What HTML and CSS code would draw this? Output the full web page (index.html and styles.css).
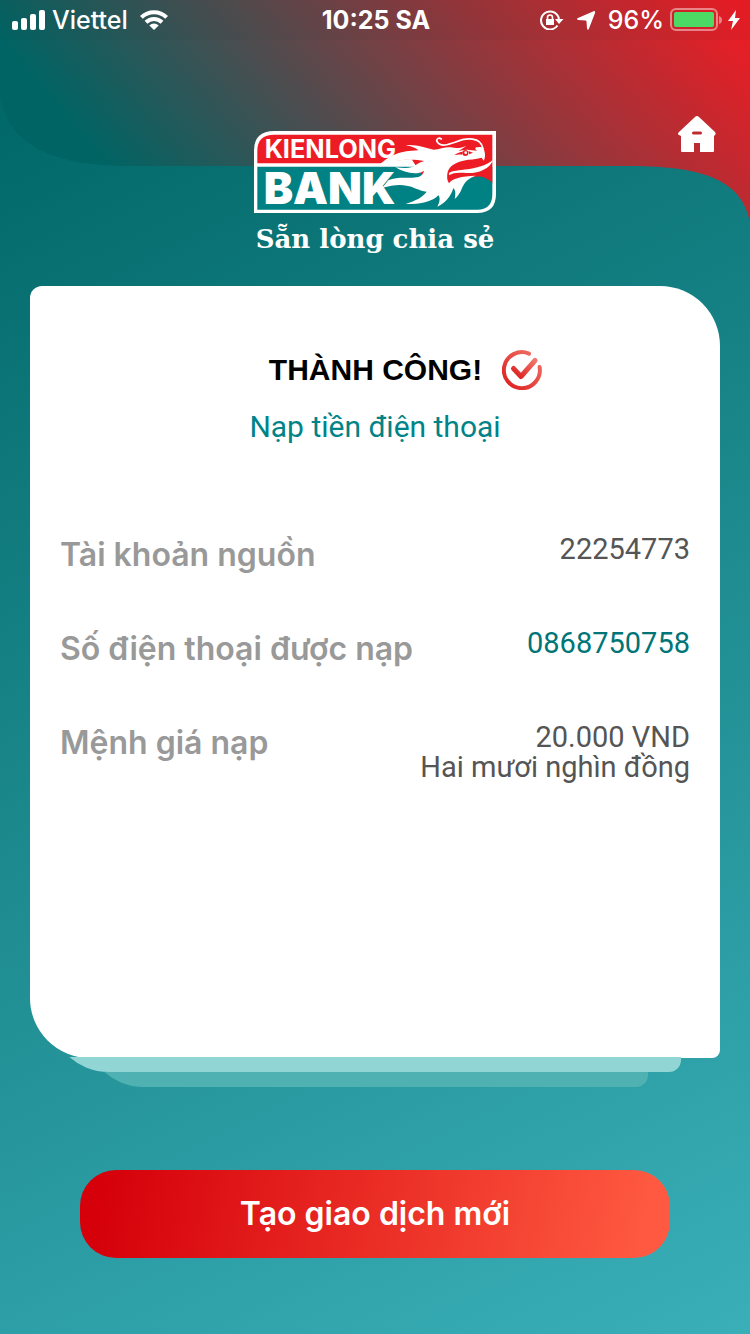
FILE: index.html
```html
<!DOCTYPE html>
<html lang="vi">
<head>
<meta charset="utf-8">
<meta name="viewport" content="width=device-width, initial-scale=1">
<title>Kienlong Bank</title>
<link rel="stylesheet" href="styles.css">
</head>
<body>
<div class="screen">
  <svg class="backdrop" viewBox="0 0 750 222" preserveAspectRatio="none" aria-hidden="true">
    <defs>
      <linearGradient id="sky" gradientUnits="userSpaceOnUse" x1="0" y1="42" x2="445" y2="-336">
        <stop offset="0" stop-color="#006464"/>
        <stop offset="1" stop-color="#ed1c24"/>
      </linearGradient>
    </defs>
    <path fill="url(#sky)" d="M0 0H750V222C742 181 705 166 630 166H120C60 165 8 148 0 96Z"/>
  </svg>

  <div class="status">
    <div class="status-side">
      <svg width="34" height="20" viewBox="0 0 34 20" fill="#fff" aria-hidden="true">
        <rect x="0" y="11" width="6" height="9" rx="2"/><rect x="9" y="8" width="6" height="12" rx="2"/>
        <rect x="18" y="4" width="6" height="16" rx="2"/><rect x="27" y="0" width="6" height="20" rx="2"/>
      </svg>
      <span>Viettel</span>
      <svg class="wifi" width="28" height="20" viewBox="0 0 28 20" aria-hidden="true">
        <g fill="none" stroke="#fff" stroke-width="4"><path d="M1.400 7.400A18 18 0 0 1 26.600 7.400"/><path d="M6 12.200A11.500 11.500 0 0 1 22 12.200"/></g>
        <path fill="#fff" d="M9.300 15.400A7 7 0 0 1 18.700 15.400L14 20Z"/>
      </svg>
    </div>
    <time class="clock">10:25 SA</time>
    <div class="status-side status-end">
      <svg width="24" height="20" viewBox="0 0 24 20" aria-hidden="true">
        <path fill="none" stroke="#fff" stroke-width="2" d="M17.500 15.500A9 9 0 1 1 19 9.500"/>
        <path fill="#fff" d="M15 9H23.500L19 14ZM6 9H14V15H6Z"/>
        <path fill="none" stroke="#fff" stroke-width="1.600" d="M7.500 9V7.500A2.500 2.500 0 0 1 12.500 7.500V9"/>
      </svg>
      <svg class="arrow" width="20" height="20" viewBox="0 0 20 20" aria-hidden="true"><path fill="#fff" d="M17 1.400Q19.500 0 19 3L13 18.500Q12 21 11 18.500L10.500 11.500Q10.500 10.500 9.500 10.500L2 10Q0 9 2 8Z"/></svg>
      <span>96%</span>
      <svg class="battery" width="52" height="24" viewBox="0 0 52 24" aria-hidden="true">
        <rect x="1" y="1" width="46" height="21" rx="5" fill="none" stroke="#fff" stroke-opacity=".45" stroke-width="2"/>
        <rect x="4" y="4" width="40" height="15" rx="2" fill="#4cd964"/>
        <path fill="#fff" fill-opacity=".45" d="M49 8Q52 9 52 12T49 16Z"/>
      </svg>
      <svg width="12" height="20" viewBox="0 0 12 20" fill="#fff" aria-hidden="true"><path d="M8 0L0 11H5L3 20L12 8H7Z"/></svg>
    </div>
  </div>

  <header class="top">
    <div class="brand">
      <svg class="logo" viewBox="27 33 726 246" role="img" aria-label="Kienlong Bank">
        <path fill="#fff" d="M88 33H753V222Q753 279 696 279H27V92Q27 33 88 33Z"/>
        <path fill="#008285" d="M37 140H742V222Q742 269 696 269H37Z"/>
        <path fill="#ed1c24" d="M37 130V92Q37 44 88 44H742V190C722 164 680 162 650 190L560 210L500 118C460 120 430 124 410 130Z"/>
        <text class="logo-small" x="59" y="114">KIENLONG</text>
        <text class="logo-big" x="56" y="253">BANK</text>
        <path fill="#fff" d="M405 132C428 112 456 94 500 92L520 91C512 84 500 78 482 76C512 72 540 84 566 89C586 88 600 80 618 82C634 86 650 84 664 78L640 94C650 92 658 88 672 90L696 92C688 86 690 80 700 82C708 78 716 84 718 92C722 104 720 114 716 122L710 113C690 119 675 117 655 122C630 127 612 140 608 156C605 170 606 182 612 190C620 176 650 168 692 167C672 174 660 185 652 202C646 219 638 230 629 237C633 219 631 211 625 204C618 230 600 249 577 260C585 245 586 232 580 226C562 245 525 255 482 251C512 243 535 230 545 215C520 212 505 199 485 197C462 192 440 196 412 203L430 181C460 167 495 177 520 171C530 167 536 160 537 152C517 166 480 160 451 142C475 144 499 147 511 136C521 129 529 125 538 123C500 116 450 117 405 140Z"/>
        <path fill="#fff" d="M612 159C630 144 700 156 744 119C736 146 700 161 664 159C640 157 624 158 612 166Z"/>
        <path fill="none" stroke="#fff" stroke-width="5" stroke-linecap="round" d="M589 57C580 50 572 59 577 66C587 82 610 74 630 67C664 52 708 50 714 86"/>
        <circle cx="661" cy="99" r="9" fill="#ed1c24"/><circle cx="662" cy="98" r="4" fill="#fff"/>
        <path fill="#ed1c24" d="M628 105C636 98 646 96 654 95L651 104C643 103 636 104 628 105ZM670 93L684 98L672 103Z"/>
      </svg>
      <p class="slogan">Sẵn lòng chia sẻ</p>
    </div>
    <button class="home" type="button" aria-label="Trang chủ">
      <svg width="40" height="38" viewBox="0 0 40 38" aria-hidden="true">
        <path fill="#fff" fill-rule="evenodd" d="M20 1Q21 1 22 2L38 17Q39.500 19 38 20L37 21V36Q37 37 36 37H23V28H17V37H5Q4 37 4 36V21L2 20Q0 19 2 17L18 2Q19 1 20 1ZM16.500 16.500A1.500 1.500 0 0 0 16.500 19.500H23.500A1.500 1.500 0 0 0 23.500 16.500Z"/>
      </svg>
    </button>
  </header>

  <main class="content">
    <section class="card">
      <div class="result">
        <h1 class="title">THÀNH CÔNG!</h1>
        <svg class="check" width="40" height="40" viewBox="0 0 40 40" aria-hidden="true">
          <defs><linearGradient id="tick" x1="0" y1="1" x2="1" y2="0"><stop offset="0" stop-color="#dc1c1c"/><stop offset="1" stop-color="#f0776c"/></linearGradient></defs>
          <g fill="none" stroke="url(#tick)" stroke-linecap="round">
            <path stroke-width="4" d="M27 3.600A18 18 0 1 0 37.600 17"/>
            <path stroke-width="5" stroke-linejoin="round" d="M11.500 18.500L19 26.500L33 10.500"/>
          </g>
        </svg>
      </div>
      <p class="subtitle">Nạp tiền điện thoại</p>
      <dl class="details">
        <div class="row"><dt>Tài khoản nguồn</dt><dd>22254773</dd></div>
        <div class="row"><dt>Số điện thoại được nạp</dt><dd class="phone">0868750758</dd></div>
        <div class="row"><dt>Mệnh giá nạp</dt><dd>20.000 VND<br>Hai mươi nghìn đồng</dd></div>
      </dl>
    </section>
    <div class="sheet sheet-near"></div>
    <div class="sheet sheet-far"></div>
    <button class="action" type="button">Tạo giao dịch mới</button>
  </main>
</div>
</body>
</html>
```
FILE: styles.css
```css
* { box-sizing: border-box; }

body {
  margin: 0;
  font-family: Inter, "Noto Sans", sans-serif;
}

h1, p, dl, dd { margin: 0; }

button {
  border: 0;
  padding: 0;
  background: none;
  font: inherit;
  cursor: pointer;
}

svg { display: block; flex: none; }

.screen {
  position: relative;
  display: flex;
  flex-direction: column;
  min-height: 100vh;
  background: linear-gradient(154deg, #006666 4%, #3aafb8 100%);
}

.backdrop {
  position: absolute;
  top: 0;
  left: 0;
  width: 100%;
  height: 222px;
}

.status {
  position: relative;
  display: grid;
  grid-template-columns: 1fr auto 1fr;
  align-items: center;
  height: 40px;
  padding: 0 10px 0 12px;
  background: rgba(0, 40, 40, 0.04);
  color: #fff;
  font-size: 25px;
  font-weight: 500;
}

.status-side {
  display: flex;
  align-items: center;
  gap: 6px;
}

.status-end { justify-content: flex-end; }

.wifi { margin-left: 6px; }

.arrow { margin: 0 6px; }

.clock { font-weight: 700; }

.top {
  position: relative;
  display: grid;
  grid-template-columns: 1fr auto 1fr;
  align-items: start;
  padding: 75px 33px 30px;
}

.brand {
  grid-column: 2;
  display: flex;
  flex-direction: column;
  align-items: center;
  padding-top: 16px;
}

.logo {
  width: 242px;
  height: 82px;
  overflow: visible;
}

.logo-small {
  font: 700 76px Inter, sans-serif;
  fill: #fff;
}

.logo-big {
  font: 900 132px Inter, sans-serif;
  fill: #fff;
}

.slogan {
  padding-top: 9px;
  color: #fff;
  font: 700 26px/34px "DejaVu Serif", serif;
  white-space: nowrap;
}

.home { justify-self: end; }

.content {
  position: relative;
  display: flex;
  flex: 1;
  flex-direction: column;
  padding: 0 30px 76px;
}

.card {
  flex: 1;
  min-height: 620px;
  padding: 60px 30px;
  border-radius: 12px 60px 8px 60px;
  background: #fff;
}

.result {
  display: flex;
  align-items: center;
  justify-content: center;
  gap: 20px;
  padding: 4px 0 0 61px;
}

.title {
  color: #000;
  font: 700 30px/40px "Liberation Sans", Arial, sans-serif;
}

.subtitle {
  padding-top: 18px;
  color: #008487;
  font: 400 30px/38px Roboto, sans-serif;
  text-align: center;
}

.details {
  display: flex;
  flex-direction: column;
  gap: 34px;
  padding-top: 88px;
}

.row {
  display: flex;
  justify-content: space-between;
  min-height: 60px;
}

.row dt {
  color: #999;
  font-size: 32px;
  font-weight: 600;
  line-height: 42px;
}

.row dd {
  color: #555;
  font: 400 29px/30px Roboto, sans-serif;
  text-align: right;
}

.row .phone { color: #007577; }

.sheet {
  position: relative;
  height: 15px;
  overflow: hidden;
}

.sheet::before {
  content: "";
  position: absolute;
  inset: auto 0 0;
  height: 64px;
  border-radius: 0 0 12px 60px;
}

.sheet-near { margin: -1px 39px 0 19px; }

.sheet-near::before { background: #91d5d5; }

.sheet-far { margin: 0 72px 0 54px; }

.sheet-far::before { background: #50b1b3; }

.action {
  margin: 83px 50px 0;
  border-radius: 36px;
  background: linear-gradient(100deg, #d5000a 4%, #ff5a41 96%);
  color: #fff;
  font-size: 32px;
  font-weight: 600;
  line-height: 88px;
}
```
